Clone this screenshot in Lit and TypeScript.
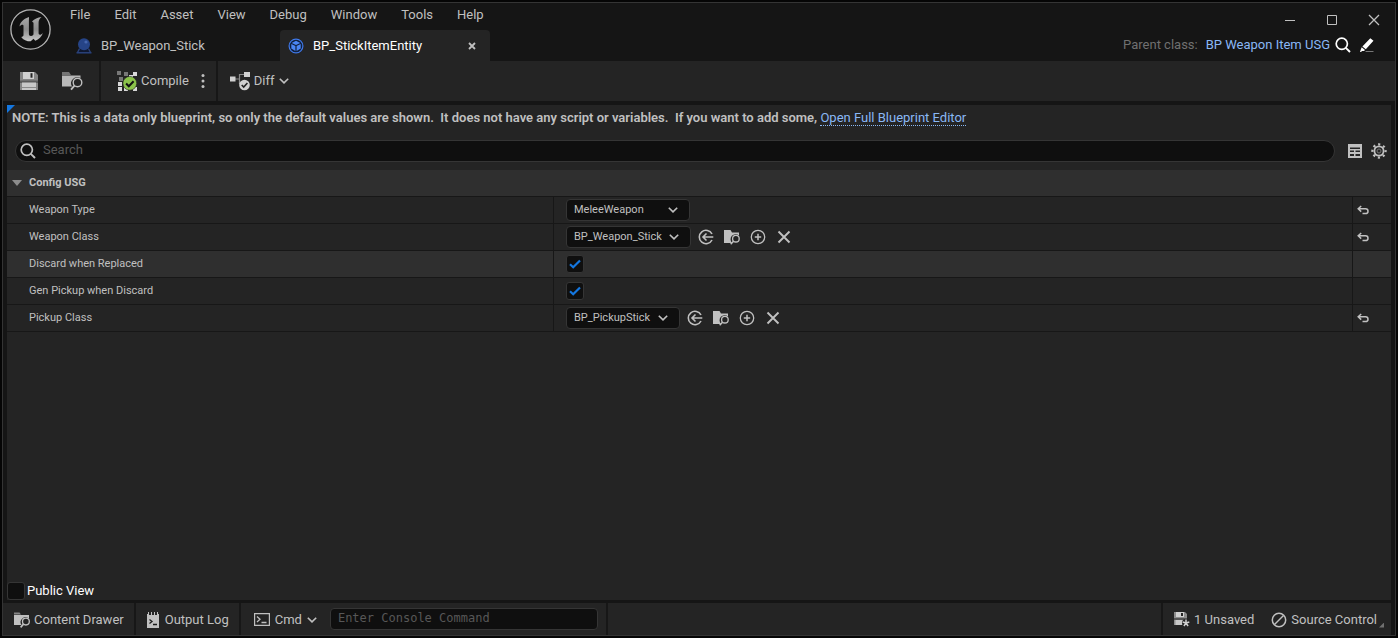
import { LitElement, html, css, svg, nothing, TemplateResult } from "lit";
import { customElement, property } from "lit/decorators.js";
import { classMap } from "lit/directives/class-map.js";

type Icon = { box: [number, number]; art: unknown };

const icons: Record<string, Icon> = {
  logo: {
    box: [42, 42],
    art: svg`
      <defs><linearGradient id="metal" x1="0" y1="0" x2="0" y2="1">
        <stop offset="0" stop-color="#a8a8a8"/><stop offset="0.5" stop-color="#8c8c8c"/><stop offset="1" stop-color="#c8c8c8"/>
      </linearGradient></defs>
      <circle cx="21.500" cy="21.500" r="19.600" fill="#111" stroke="#b4b4b4" stroke-width="1.300"/>
      <path fill="url(#metal)" d="M20 9C15 10.500 11 14 10.500 18.500c1-1.200 2-1.800 2.800-1.800.8 0 1.200.5 1.200 1.400V27c0 1.200-.8 1.800-2.300 1.900 2 3 5.500 4.400 9.500 4.400l2.800-2.600 1.800 2c3.600-1.300 6.400-4 7.700-8-1.200 1.400-2.200 2-3 2-1 0-1.400-.6-1.400-1.600V14.500c0-2.200 1-3.900 2.900-5.500C28.500 9.500 25.500 11 23 13.500l1.500 1.200v11.800c-.8 1-1.700 1.500-2.600 1.500-1.300 0-2-.7-2-2V13.500c0-2 .2-3.300.1-4.500z"/>`,
  },
  pawn: {
    box: [16, 16],
    art: svg`<path d="M3.500 10.500h9l2.700 5H.8z" fill="#0f1830"/><path d="M.5 14h15v1.500H.5zM2.800 10.500h1.500L2.500 14H1zM11.700 10.500h1.500L15 14h-1.500z" fill="#294078"/>
      <circle cx="8" cy="6.300" r="6" fill="#264487"/><circle cx="10" cy="4" r="1.600" fill="#4566ad"/>`,
  },
  cube: {
    box: [16, 16],
    art: svg`<circle cx="8" cy="8" r="6.900" fill="#10203f" stroke="#3f78e8" stroke-width="1.200"/>
      <path d="M8 2.800l4.300 2.100L8 7 3.700 4.900zM3.300 5.900l4.100 2v5L3.300 10.600zM12.700 5.900l-4.100 2v5l4.100-2.300z" fill="#4a86f5"/>`,
  },
  close: { box: [10, 10], art: svg`<path d="M2 2l6 6M8 2l-6 6" stroke="currentColor" stroke-width="1.800"/>` },
  winMin: { box: [12, 12], art: svg`<path d="M1 6.500h10" stroke="currentColor"/>` },
  winMax: { box: [12, 12], art: svg`<path d="M1.500 1.500h9v9h-9z" fill="none" stroke="currentColor"/>` },
  winClose: { box: [12, 12], art: svg`<path d="M1 1l10 10M11 1L1 11" stroke="currentColor" stroke-width="1.300"/>` },
  search: {
    box: [16, 16],
    art: svg`<circle cx="6.800" cy="6.800" r="5.600" fill="none" stroke="currentColor" stroke-width="1.700"/><path d="M10.800 10.800l4.200 4.200" stroke="currentColor" stroke-width="1.900"/>`,
  },
  pencil: {
    box: [16, 16],
    art: svg`<path d="M11.300 1.200l3.200 2.600-7.700 8.500-3.400-2.700zM2.700 10.300l3.300 2.700-1 .9-2 .1-.9 1H1l.7-2.300z" fill="currentColor"/><path d="M6.500 14.500H14.500" stroke="#777"/>`,
  },
  save: {
    box: [18, 18],
    art: svg`<path d="M0 0h15l3 3v15H0z" fill="#858585"/><path d="M3 0h11v7H3z" fill="#d0d0d0"/><path d="M10.500 1.200h2v4.500h-2z" fill="#242424"/>
      <path d="M0 8.500h18V11H0z" fill="#5a5a5a"/><path d="M2 10.500h14V18H2z" fill="#c8c8c8"/><path d="M2 15h14v1H2z" fill="#8a8a8a"/>`,
  },
  browse: {
    box: [21, 20],
    art: svg`<path d="M0 1h7l2 3H0z" fill="#747474"/><path d="M0 4.500h18.500V7a6.200 6.200 0 0 0-8.500 8.500H0z" fill="#b8b8b8"/>
      <circle cx="15.500" cy="11.500" r="4.300" fill="#242424" stroke="#c0c0c0" stroke-width="1.400"/><path d="M12.500 14.700L9 18.700" stroke="#c0c0c0" stroke-width="1.900"/>`,
  },
  drawer: {
    box: [16, 16],
    art: svg`<path d="M0 .5h5.500l1.500 2H0z" fill="#848484"/><path d="M0 3h15v3.500a5 5 0 0 0-7.500 6.500H0z" fill="#c0c0c0"/>
      <circle cx="11.900" cy="9.600" r="3.400" fill="#242424" stroke="#c0c0c0" stroke-width="1.300"/><path d="M9.500 12.100l-2.900 3.300" stroke="#c0c0c0" stroke-width="1.600"/>`,
  },
  folderSearch: {
    box: [16, 16],
    art: svg`<path d="M0 1h6.500l1.500 2.500h7v3a5 5 0 0 0-6.800 7.500H0z" fill="#c0c0c0"/>
      <circle cx="11.900" cy="9.700" r="3.300" fill="#242424" stroke="#c0c0c0" stroke-width="1.300"/><path d="M9.500 12.200l-2.800 3" stroke="#c0c0c0" stroke-width="1.500"/>`,
  },
  compile: {
    box: [20, 20],
    art: svg`<g fill="#777"><path d="M0 0h4v4H0zM7 1h4v4H7zM2 6h4v4H2z"/></g><g fill="#d8d8d8"><path d="M16 1h4v4h-4zM12 4h4v4h-4zM1 11h4v4H1zM1 16h4v4H1zM7 16h4v4H7zM16 16h4v4h-4z"/></g>
      <circle cx="12.800" cy="12.300" r="6.900" fill="#8bc34a" stroke="#242424" stroke-width=".6"/><path d="M9.100 12.500l2.700 2.700 4.800-5" fill="none" stroke="#111" stroke-width="2"/>`,
  },
  dots: { box: [4, 16], art: svg`<g fill="currentColor"><circle cx="2" cy="2.500" r="1.500"/><circle cx="2" cy="8" r="1.500"/><circle cx="2" cy="13.500" r="1.500"/></g>` },
  diff: {
    box: [20, 20],
    art: svg`<path d="M5 8h4.500M15 3.500H9.500V13" fill="none" stroke="#8a8a8a" stroke-width="1.200"/><path d="M0 5.500h5.500v5H0zM14 1h6v5h-6z" fill="#d0d0d0"/>
      <circle cx="14.500" cy="14" r="5.300" fill="#d0d0d0"/><path d="M11.700 14l2 2 3.700-4" fill="none" stroke="#222" stroke-width="1.600"/>`,
  },
  chevron: { box: [10, 6], art: svg`<path d="M.8.8L5 4.900 9.200.8" fill="none" stroke="currentColor" stroke-width="1.600"/>` },
  grid: {
    box: [14, 14],
    art: svg`<path fill-rule="evenodd" d="M0 0h14v14H0zM2 3.500h10V5H2zM2 6.500h4V8H2zM7.500 6.500H12V8H7.500zM2 10h4v2H2zM7.500 10H12v2H7.500z" fill="currentColor"/>`,
  },
  gear: {
    box: [16, 16],
    art: svg`<circle cx="8" cy="8" r="6.600" fill="none" stroke="currentColor" stroke-width="2.200" stroke-dasharray="2.200 2.984" stroke-dashoffset="1.100"/>
      <circle cx="8" cy="8" r="4.600" fill="none" stroke="currentColor" stroke-width="1.800"/><circle cx="8" cy="8" r="2" fill="none" stroke="#777"/>`,
  },
  arrowDown: { box: [10, 6], art: svg`<path d="M0 0h10L5 6z" fill="#8c8c8c"/>` },
  useSelected: {
    box: [16, 16],
    art: svg`<path d="M14 5A6.700 6.700 0 1 0 14 11M15.300 8H5M8.500 4.500L5 8l3.500 3.500" fill="none" stroke="currentColor" stroke-width="1.600"/>`,
  },
  plus: {
    box: [16, 16],
    art: svg`<circle cx="8" cy="8" r="6.700" fill="none" stroke="currentColor" stroke-width="1.300"/><path d="M8 4.800v6.400M4.800 8h6.400" stroke="currentColor" stroke-width="1.500"/>`,
  },
  clear: { box: [16, 16], art: svg`<path d="M2.500 2.500l11 11M13.500 2.500l-11 11" stroke="currentColor" stroke-width="1.900"/>` },
  reset: {
    box: [12, 10],
    art: svg`<path d="M4.200 1L1.200 3.800l3 2.800M1.400 3.800h7.200a2.400 2.400 0 0 1 0 4.800H5.500" fill="none" stroke="currentColor" stroke-width="1.500"/>`,
  },
  check: { box: [12, 10], art: svg`<path d="M1 5.200l3.200 3L11 1.500" fill="none" stroke="#1477e0" stroke-width="2.200"/>` },
  log: {
    box: [12, 16],
    art: svg`<path d="M0 2h12v14H0z" fill="#c0c0c0"/><path d="M1 0h1v3H1zM4 0h1v3H4zM7 0h1v3H7zM10 0h1v3h-1z" fill="#c0c0c0"/><path d="M2 2h2v1H2zM5 2h2v1H5zM8 2h2v1H8z" fill="#242424"/>
      <path d="M2.500 7.500L5 9.500l-2.500 2M6 12.500h4" fill="none" stroke="#1a1a1a" stroke-width="1.300"/>`,
  },
  terminal: {
    box: [16, 13],
    art: svg`<path d="M.6.600h14.800v11.800H.6z" fill="none" stroke="currentColor" stroke-width="1.200"/><path d="M3 3.500l3 2.700-3 2.700M7.500 9.500h5" fill="none" stroke="currentColor" stroke-width="1.300"/>`,
  },
  unsaved: {
    box: [16, 15],
    art: svg`<path d="M0 0h11l2 2v11H0z" fill="#8c8c8c"/><path d="M2 0h8v5H2z" fill="#d0d0d0"/><path d="M7 1h2v3H7z" fill="#242424"/><path d="M0 6h13v2H0z" fill="#555"/><path d="M1.500 8H9v5H1.500z" fill="#c8c8c8"/>
      <circle cx="12" cy="11" r="4" fill="#242424"/><path d="M12 7.500V11M8.700 10l3.300 1 3.300-1M9.900 14l2.100-3 2.100 3" fill="none" stroke="#d0d0d0" stroke-width="1.500"/>`,
  },
  forbidden: {
    box: [16, 16],
    art: svg`<circle cx="8" cy="8" r="6.700" fill="none" stroke="currentColor" stroke-width="1.500"/><path d="M3.500 12.500l9-9" stroke="currentColor" stroke-width="1.500"/>`,
  },
};

const icon = (name: string): TemplateResult => {
  const [w, h] = icons[name].box;
  return html`<svg class="icon" width=${w} height=${h} viewBox="0 0 ${w} ${h}" aria-hidden="true">${icons[name].art}</svg>`;
};

const base = css`
  * { box-sizing: border-box; }
  button, input, select { margin: 0; font: inherit; color: inherit; }
  button { display: flex; align-items: center; padding: 0; border: 0; background: none; white-space: nowrap; }
  .icon { display: block; flex: none; }
  .check { display: inline-grid; place-items: center; }
  .check > * { grid-area: 1 / 1; }
  .check .icon { pointer-events: none; visibility: hidden; }
  .check :checked + .icon { visibility: visible; }
  .box { appearance: none; width: 18px; height: 18px; border: 1px solid #353535; border-radius: 3px; background: #0f0f0f; }
`;

type Row = { id: string; name: string; kind: "enum" | "class" | "bool"; value?: string; reset?: boolean; hovered?: boolean };

@customElement("property-row")
class PropertyRow extends LitElement {
  @property({ attribute: false }) row!: Row;

  static styles = [
    base,
    css`
      :host { display: block; font-size: 11px; }
      .row { display: grid; grid-template-columns: minmax(0, 546fr) minmax(0, 799fr) 39px; height: 27px; border-bottom: 1px solid #171717; }
      .hovered { background: #2f2f2f; }
      .name { display: flex; align-items: center; padding-left: 22px; }
      .value, .tail { display: flex; align-items: center; border-left: 1px solid #171717; }
      .value { padding-left: 12px; }
      .tail { padding-left: 4px; }
      .combo { display: inline-grid; align-items: center; margin-right: 7px; }
      .combo > * { grid-area: 1 / 1; }
      .combo .icon { justify-self: end; margin-right: 12px; pointer-events: none; }
      select { appearance: none; height: 22px; padding: 0 28px 1px 7px; border: 1px solid #353535; border-radius: 4px; background: #0f0f0f; }
      .enum select { min-width: 124px; }
      .tools { display: flex; gap: 10px; }
    `,
  ];

  private control() {
    const { id, kind, value, name } = this.row;
    if (kind === "bool") {
      return html`<span class="check"><input class="box" id=${id} type="checkbox" checked />${icon("check")}</span>`;
    }
    return html`
      <span class="combo ${kind}"><select id=${id}><option>${value}</option></select>${icon("chevron")}</span>
      ${kind === "class"
        ? html`<span class="tools">
            <button aria-label="Use selected ${name}">${icon("useSelected")}</button>
            <button aria-label="Browse to ${name}">${icon("folderSearch")}</button>
            <button aria-label="Create ${name}">${icon("plus")}</button>
            <button aria-label="Clear ${name}">${icon("clear")}</button>
          </span>`
        : nothing}`;
  }

  render() {
    const r = this.row;
    return html`<div class=${classMap({ row: true, hovered: !!r.hovered })}>
      <label class="name" for=${r.id}>${r.name}</label>
      <div class="value">${this.control()}</div>
      <div class="tail">${r.reset ? html`<button aria-label="Reset ${r.name}">${icon("reset")}</button>` : nothing}</div>
    </div>`;
  }
}

@customElement("app-root")
class AppRoot extends LitElement {
  private menus = ["File", "Edit", "Asset", "View", "Debug", "Window", "Tools", "Help"];

  private rows: Row[] = [
    { id: "weapon-type", name: "Weapon Type", kind: "enum", value: "MeleeWeapon", reset: true },
    { id: "weapon-class", name: "Weapon Class", kind: "class", value: "BP_Weapon_Stick", reset: true },
    { id: "discard", name: "Discard when Replaced", kind: "bool", hovered: true },
    { id: "gen-pickup", name: "Gen Pickup when Discard", kind: "bool" },
    { id: "pickup-class", name: "Pickup Class", kind: "class", value: "BP_PickupStick", reset: true },
  ];

  static styles = [
    base,
    css`
      :host { display: flex; min-height: 100vh; padding: 2px; box-sizing: border-box; background: #050505; color: #c0c0c0; font: 13px/16px Roboto, sans-serif; }
      .window { flex: 1; min-width: 0; display: flex; flex-direction: column; border: 1px solid #343434; background: #151515; }

      header { display: flex; height: 58px; }
      .brand { width: 65px; padding: 5px 6px; }
      .left { flex: 1; min-width: 0; display: flex; flex-direction: column; justify-content: space-between; }
      .menu { display: flex; gap: 24px; padding: 4px 2px; }
      .tabs { display: flex; gap: 2px; }
      .tab { display: flex; align-items: center; gap: 9px; width: 210px; height: 31px; padding: 0 13px 0 8px; border-radius: 4px 4px 0 0; }
      .tab .title { flex: 1; text-align: left; }
      .active { background: #242424; color: #fff; }
      .active button:last-child { color: #c0c0c0; }
      .right { display: flex; flex-direction: column; align-items: flex-end; gap: 11px; padding: 11px 15px 0 0; }
      .controls { display: flex; gap: 30px; }
      .parent { display: flex; align-items: center; gap: 8px; margin-right: 5px; color: #fff; }
      .muted { color: #707070; }
      a { color: #8ab8f5; text-decoration: none; }
      .parent a { margin-right: -3px; }

      .toolbar { display: flex; height: 40px; background: #242424; }
      .group { display: flex; align-items: center; border-right: 2px solid #171717; }
      .group:last-child { border: 0; }
      .files { gap: 24px; padding: 0 16px 0 17px; }
      .build { gap: 12px; padding: 0 11px 0 16px; }
      .compare { padding: 0 12px; }
      .labelled { gap: 4px; }

      main { flex: 1; position: relative; display: flex; flex-direction: column; margin: 4px 4px 3px; background: #242424; }
      .corner { position: absolute; top: 0; left: 0; width: 8px; height: 8px; background: #1477e0; clip-path: polygon(0 0, 100% 0, 0 100%); }
      .note { margin: 0; padding: 5px 5px 14px; font-weight: 600; white-space: pre-wrap; }
      .note a { font-weight: 400; border-bottom: 1px dotted #8ab8f5; }
      .filter { display: flex; align-items: center; gap: 9px; padding: 0 4px 8px 8px; }
      .search { flex: 1; display: flex; align-items: center; gap: 7px; height: 22px; margin-right: 4px; padding-left: 4px; border: 1px solid #353535; border-radius: 11px; background: #0f0f0f; }
      .search input { flex: 1; min-width: 0; padding: 0 0 2px; border: 0; outline: 0; background: none; }
      ::placeholder { color: #575757; opacity: 1; }
      .category { display: flex; align-items: center; gap: 7px; width: 100%; height: 27px; padding: 0 5px 1px; border-bottom: 1px solid #171717; background: #2f2f2f; font-size: 11px; font-weight: 700; }
      .public { display: flex; align-items: center; gap: 2px; margin-top: auto; color: #fff; }

      footer { display: flex; height: 32px; margin-right: 4px; background: #242424; }
      footer button { padding-top: 1px; }
      .cell { display: flex; align-items: center; padding: 0 10px 0 11px; border-right: 2px solid #171717; }
      .cell .log { gap: 6px; }
      .cmd { gap: 13px; padding: 0 8px 0 13px; }
      .cmd .pick { gap: 5px; }
      .console { width: 268px; height: 22px; padding: 0 7px 2px; border: 1px solid #353535; border-radius: 4px; background: #0f0f0f; font: 12px "DejaVu Sans Mono", monospace; }
      .status { gap: 17px; margin-left: auto; padding: 0 7px 0 11px; border: 0; border-left: 2px solid #171717; }
      .source { display: flex; gap: 2px; }
      .grip { width: 5px; height: 5px; align-self: flex-end; background: #707070; clip-path: polygon(100% 0, 100% 100%, 0 100%); }
    `,
  ];

  render() {
    return html`<div class="window">
      <header>
        <div class="brand">${icon("logo")}</div>
        <div class="left">
          <nav class="menu">${this.menus.map((m) => html`<button>${m}</button>`)}</nav>
          <div class="tabs">
            <div class="tab">${icon("pawn")}<button class="title">BP_Weapon_Stick</button></div>
            <div class="tab active">${icon("cube")}<button class="title">BP_StickItemEntity</button><button aria-label="Close tab">${icon("close")}</button></div>
          </div>
        </div>
        <div class="right">
          <div class="controls">
            <button aria-label="Minimize">${icon("winMin")}</button>
            <button aria-label="Maximize">${icon("winMax")}</button>
            <button aria-label="Close">${icon("winClose")}</button>
          </div>
          <div class="parent">
            <span class="muted">Parent class:</span><a href="#">BP Weapon Item USG</a>
            <button aria-label="Find parent class">${icon("search")}</button>
            <button aria-label="Edit parent class">${icon("pencil")}</button>
          </div>
        </div>
      </header>

      <div class="toolbar">
        <div class="group files">
          <button aria-label="Save">${icon("save")}</button>
          <button aria-label="Browse">${icon("browse")}</button>
        </div>
        <div class="group build">
          <button class="labelled">${icon("compile")}Compile</button>
          <button aria-label="Compile options">${icon("dots")}</button>
        </div>
        <div class="group compare"><button class="labelled">${icon("diff")}Diff${icon("chevron")}</button></div>
      </div>

      <main>
        <span class="corner"></span>
        <p class="note">NOTE: This is a data only blueprint, so only the default values are shown.  It does not have any script or variables.  If you want to add some, <a href="#">Open Full Blueprint Editor</a></p>
        <div class="filter">
          <label class="search">${icon("search")}<input type="text" placeholder="Search" aria-label="Search" /></label>
          <button aria-label="Property matrix">${icon("grid")}</button>
          <button aria-label="Settings">${icon("gear")}</button>
        </div>
        <button class="category" aria-expanded="true">${icon("arrowDown")}Config USG</button>
        ${this.rows.map((r) => html`<property-row .row=${r}></property-row>`)}
        <label class="public"><span class="check"><input class="box" type="checkbox" />${icon("check")}</span>Public View</label>
      </main>

      <footer>
        <div class="cell"><button class="labelled">${icon("drawer")}Content Drawer</button></div>
        <div class="cell"><button class="log">${icon("log")}Output Log</button></div>
        <div class="cell cmd">
          <button class="labelled pick">${icon("terminal")}Cmd${icon("chevron")}</button>
          <input class="console" type="text" placeholder="Enter Console Command" aria-label="Console command" />
        </div>
        <div class="cell status">
          <button class="labelled">${icon("unsaved")}1 Unsaved</button>
          <span class="source"><button class="labelled">${icon("forbidden")}Source Control</button><span class="grip"></span></span>
        </div>
      </footer>
    </div>`;
  }
}
